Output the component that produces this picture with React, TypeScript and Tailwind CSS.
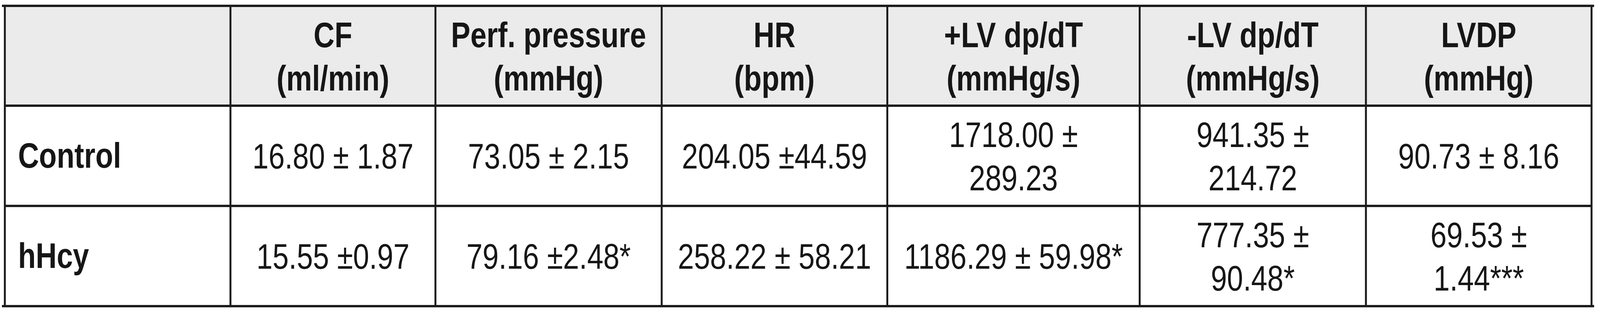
import React from "react"

const headers = [
  ["CF", "(ml/min)"],
  ["Perf. pressure", "(mmHg)"],
  ["HR", "(bpm)"],
  ["+LV dp/dT", "(mmHg/s)"],
  ["-LV dp/dT", "(mmHg/s)"],
  ["LVDP", "(mmHg)"],
]

const rows: { label: string; values: string[][] }[] = [
  {
    label: "Control",
    values: [
      ["16.80 ± 1.87"],
      ["73.05 ± 2.15"],
      ["204.05 ±44.59"],
      ["1718.00 ±", "289.23"],
      ["941.35 ±", "214.72"],
      ["90.73 ± 8.16"],
    ],
  },
  {
    label: "hHcy",
    values: [
      ["15.55 ±0.97"],
      ["79.16 ±2.48*"],
      ["258.22 ± 58.21"],
      ["1186.29 ± 59.98*"],
      ["777.35 ±", "90.48*"],
      ["69.53 ±", "1.44***"],
    ],
  },
]

// window is 4096 wide, the table is laid out at 4964 and squeezed to fit
export default function App() {
  return (
    <div className="h-[800px] w-[4096px] overflow-hidden bg-white">
      <div
        className="h-[800px] w-[4964px] origin-top-left scale-x-[0.8251] pl-[6px] pt-[12px] text-[90px] leading-[111px] text-[#161616]"
        style={{ fontFamily: '"Liberation Sans", Arial, sans-serif' }}
      >
        <div className="w-[4940px] border-y-[6px] border-[#1c1c1c]">
          <div className="ml-[6px] grid w-[4929px] grid-cols-[694px_630px_696px_694px_777px_696px_694px] grid-rows-[250px_251px_251px] gap-[6px] bg-[#1c1c1c] px-[6px]">
            <div className="bg-[#ebebeb]" />
            {headers.map((h) => (
              <div key={h[0]} className="flex items-center justify-center bg-[#ebebeb] pt-[6px] text-center font-bold">
                <div>
                  {h[0]}
                  <br />
                  {h[1]}
                </div>
              </div>
            ))}

            {rows.map((r) => (
              <React.Fragment key={r.label}>
                <div className="flex items-center bg-white pl-[38px] font-bold">{r.label}</div>
                {r.values.map((v, i) => (
                  <div key={i} className="flex items-center justify-center bg-white pt-[4px] text-center">
                    <div>
                      {v.map((line, j) => (
                        <div key={j}>{line}</div>
                      ))}
                    </div>
                  </div>
                ))}
              </React.Fragment>
            ))}
          </div>
        </div>
      </div>
    </div>
  )
}
